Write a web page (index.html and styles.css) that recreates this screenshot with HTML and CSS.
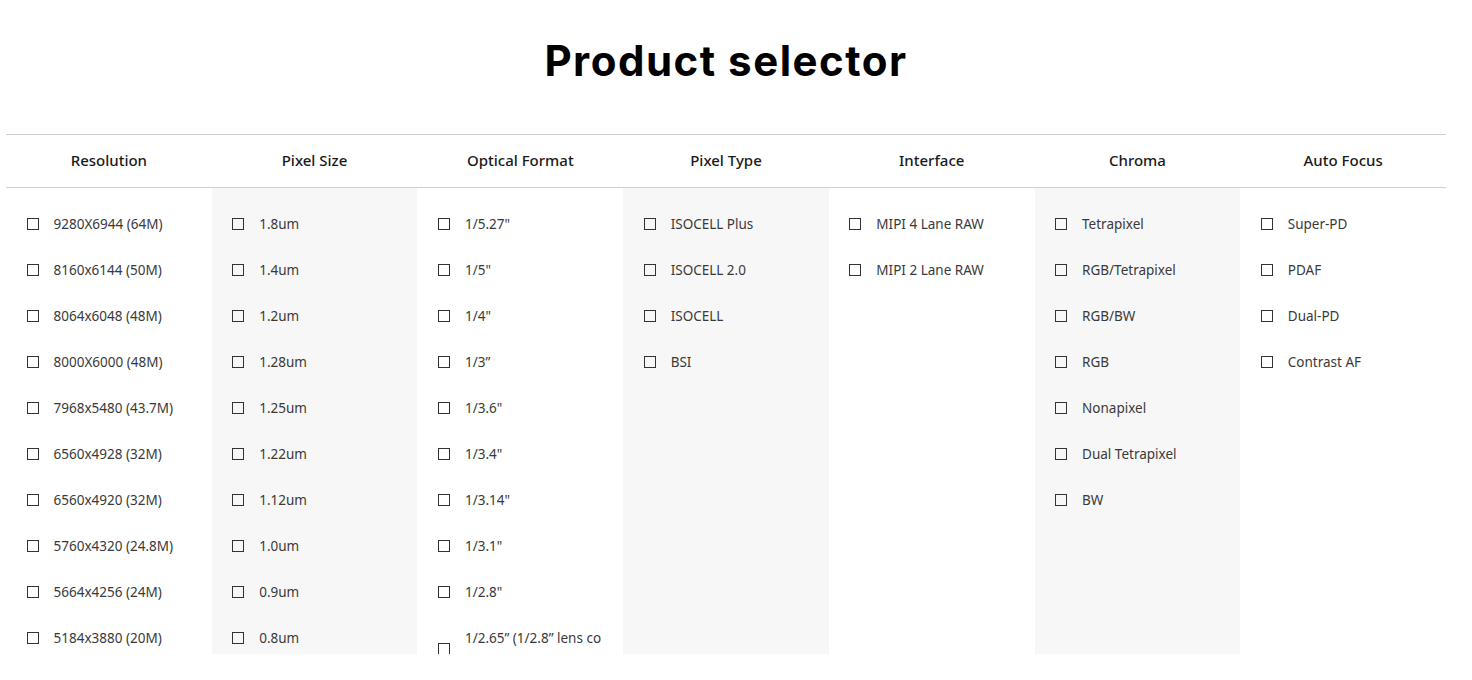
FILE: index.html
```html
<!DOCTYPE html>
<html lang="en">
<head>
<meta charset="utf-8">
<title>Product selector</title>
<link rel="stylesheet" href="styles.css">
</head>
<body>
<main class="page">
  <h1 class="title">Product selector</h1>
  <section class="selector">
    <div class="head">
      <div class="hcell">Resolution</div>
      <div class="hcell">Pixel Size</div>
      <div class="hcell">Optical Format</div>
      <div class="hcell">Pixel Type</div>
      <div class="hcell">Interface</div>
      <div class="hcell">Chroma</div>
      <div class="hcell">Auto Focus</div>
    </div>
    <div class="body">
      <ul class="col">
        <li class="opt"><span class="box"></span><span class="lbl">9280X6944 (64M)</span></li>
        <li class="opt"><span class="box"></span><span class="lbl">8160x6144 (50M)</span></li>
        <li class="opt"><span class="box"></span><span class="lbl">8064x6048 (48M)</span></li>
        <li class="opt"><span class="box"></span><span class="lbl">8000X6000 (48M)</span></li>
        <li class="opt"><span class="box"></span><span class="lbl">7968x5480 (43.7M)</span></li>
        <li class="opt"><span class="box"></span><span class="lbl">6560x4928 (32M)</span></li>
        <li class="opt"><span class="box"></span><span class="lbl">6560x4920 (32M)</span></li>
        <li class="opt"><span class="box"></span><span class="lbl">5760x4320 (24.8M)</span></li>
        <li class="opt"><span class="box"></span><span class="lbl">5664x4256 (24M)</span></li>
        <li class="opt"><span class="box"></span><span class="lbl">5184x3880 (20M)</span></li>
      </ul>
      <ul class="col alt">
        <li class="opt"><span class="box"></span><span class="lbl">1.8um</span></li>
        <li class="opt"><span class="box"></span><span class="lbl">1.4um</span></li>
        <li class="opt"><span class="box"></span><span class="lbl">1.2um</span></li>
        <li class="opt"><span class="box"></span><span class="lbl">1.28um</span></li>
        <li class="opt"><span class="box"></span><span class="lbl">1.25um</span></li>
        <li class="opt"><span class="box"></span><span class="lbl">1.22um</span></li>
        <li class="opt"><span class="box"></span><span class="lbl">1.12um</span></li>
        <li class="opt"><span class="box"></span><span class="lbl">1.0um</span></li>
        <li class="opt"><span class="box"></span><span class="lbl">0.9um</span></li>
        <li class="opt"><span class="box"></span><span class="lbl">0.8um</span></li>
      </ul>
      <ul class="col">
        <li class="opt"><span class="box"></span><span class="lbl">1/5.27"</span></li>
        <li class="opt"><span class="box"></span><span class="lbl">1/5"</span></li>
        <li class="opt"><span class="box"></span><span class="lbl">1/4"</span></li>
        <li class="opt"><span class="box"></span><span class="lbl">1/3”</span></li>
        <li class="opt"><span class="box"></span><span class="lbl">1/3.6"</span></li>
        <li class="opt"><span class="box"></span><span class="lbl">1/3.4"</span></li>
        <li class="opt"><span class="box"></span><span class="lbl">1/3.14"</span></li>
        <li class="opt"><span class="box"></span><span class="lbl">1/3.1"</span></li>
        <li class="opt"><span class="box"></span><span class="lbl">1/2.8"</span></li>
        <li class="opt"><span class="box"></span><span class="lbl wrap">1/2.65” (1/2.8” lens co<br>verage)</span></li>
      </ul>
      <ul class="col alt">
        <li class="opt"><span class="box"></span><span class="lbl">ISOCELL Plus</span></li>
        <li class="opt"><span class="box"></span><span class="lbl">ISOCELL 2.0</span></li>
        <li class="opt"><span class="box"></span><span class="lbl">ISOCELL</span></li>
        <li class="opt"><span class="box"></span><span class="lbl">BSI</span></li>
      </ul>
      <ul class="col">
        <li class="opt"><span class="box"></span><span class="lbl">MIPI 4 Lane RAW</span></li>
        <li class="opt"><span class="box"></span><span class="lbl">MIPI 2 Lane RAW</span></li>
      </ul>
      <ul class="col alt">
        <li class="opt"><span class="box"></span><span class="lbl">Tetrapixel</span></li>
        <li class="opt"><span class="box"></span><span class="lbl">RGB/Tetrapixel</span></li>
        <li class="opt"><span class="box"></span><span class="lbl">RGB/BW</span></li>
        <li class="opt"><span class="box"></span><span class="lbl">RGB</span></li>
        <li class="opt"><span class="box"></span><span class="lbl">Nonapixel</span></li>
        <li class="opt"><span class="box"></span><span class="lbl">Dual Tetrapixel</span></li>
        <li class="opt"><span class="box"></span><span class="lbl">BW</span></li>
      </ul>
      <ul class="col">
        <li class="opt"><span class="box"></span><span class="lbl">Super-PD</span></li>
        <li class="opt"><span class="box"></span><span class="lbl">PDAF</span></li>
        <li class="opt"><span class="box"></span><span class="lbl">Dual-PD</span></li>
        <li class="opt"><span class="box"></span><span class="lbl">Contrast AF</span></li>
      </ul>
    </div>
  </section>
</main>
</body>
</html>
```

FILE: styles.css
```css
* { box-sizing: border-box; }
html, body { margin: 0; padding: 0; background: #fff; }
body { font-family: "Noto Sans", "Open Sans", sans-serif; color: #363636; }

.page { padding: 0 26px 0 6px; }

.title {
  margin: 0;
  padding-top: 34px;
  height: 134px;
  width: 1440px;
  text-align: center;
  font-family: Inter, "Lato", sans-serif;
  font-weight: 700;
  font-size: 42px;
  line-height: 54px;
  letter-spacing: 1.5px;
  color: #000;
}

.selector { width: 1440px; }

.head {
  display: grid;
  grid-template-columns: repeat(7, 1fr);
  border-top: 1px solid #cfcfcf;
  border-bottom: 1px solid #cfcfcf;
  height: 54px;
}
.hcell {
  display: flex;
  align-items: center;
  justify-content: center;
  font-size: 15px;
  font-weight: 500;
  color: #1a1a1a;
  padding-bottom: 3px;
}

.body {
  display: grid;
  grid-template-columns: repeat(7, 1fr);
  height: 466px;
  overflow: hidden;
}
.col {
  list-style: none;
  margin: 0;
  padding: 25px 20px 0 20.5px;
  display: flex;
  flex-direction: column;
  gap: 24px;
}
.col.alt { background: #f7f7f7; }

.opt {
  display: flex;
  align-items: center;
  gap: 15px;
  min-height: 22px;
}
.box {
  flex: none;
  width: 12px;
  height: 12px;
  border: 1px solid #333;
  background: #fff;
}
.col.alt .box { background: transparent; }
.lbl {
  font-size: 13.5px;
  line-height: 22px;
  color: #3a3a3a;
  white-space: nowrap;
}
.lbl.wrap { white-space: normal; }
```
